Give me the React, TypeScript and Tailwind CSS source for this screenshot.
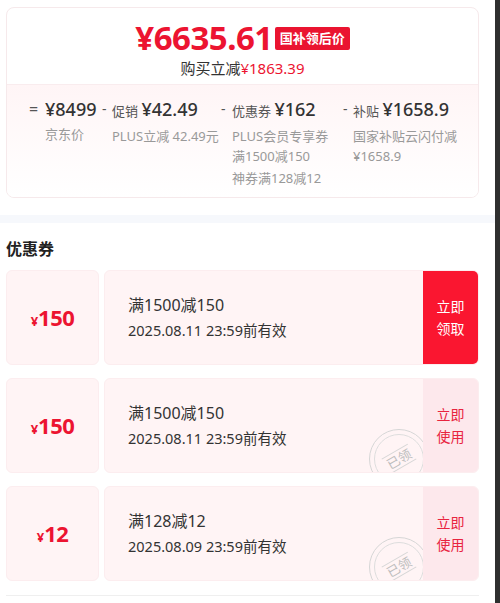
import React from 'react';

const RED = 'text-[#ec1431]';

interface Coupon {
    amount: string;
    title: string;
    expire: string;
    claimed: boolean;
}

const coupons: Coupon[] = [
    { amount: '150', title: '满1500减150', expire: '2025.08.11 23:59前有效', claimed: false },
    { amount: '150', title: '满1500减150', expire: '2025.08.11 23:59前有效', claimed: true },
    { amount: '12', title: '满128减12', expire: '2025.08.09 23:59前有效', claimed: true },
];

const Stamp: React.FC = () => (
    <div className="absolute right-[-6px] top-[50px] w-[60px] h-[60px] rounded-full border-[1.5px] border-[#d6d6d6] flex items-center justify-center">
        <div className="w-[50px] h-[50px] rounded-full border border-[#dddddd] flex items-center justify-center">
            <span className="rotate-[-30deg] text-[13px] leading-[16px] text-[#bdbdbd] border-y border-[#d6d6d6] px-[2px]">已领</span>
        </div>
    </div>
);

const CouponCard: React.FC<{ c: Coupon }> = ({ c }) => (
    <div className="flex h-[95px] gap-[5px]">
        {/* Amount stub */}
        <div className="w-[93px] rounded-[6px] bg-[#fff4f5] border border-[#fcedef] flex items-center justify-center">
            <span className={`${RED} font-bold`}>
                <span className="text-[13px]">¥</span>
                <span className="text-[22px] tracking-[-0.5px]">{c.amount}</span>
            </span>
        </div>

        {/* Body + action */}
        <div className="flex-1 flex rounded-[6px] overflow-hidden border border-[#fcedef] bg-[#fff4f5]">
            <div className="flex-1 relative overflow-hidden pl-[23px] flex flex-col justify-center">
                <div className="text-[16px] leading-[25px] text-[#333]">{c.title}</div>
                <div className="text-[14.5px] leading-[24px] text-[#333]">{c.expire}</div>
                {c.claimed && <Stamp />}
            </div>
            {c.claimed ? (
                <div className="w-[55px] bg-[#fde8ec] flex flex-col items-center justify-center text-[14px] leading-[22px] text-[#e8243f]">
                    <span>立即</span>
                    <span>使用</span>
                </div>
            ) : (
                <div className="w-[55px] bg-[#fa1630] flex flex-col items-center justify-center text-[14px] leading-[22px] text-white">
                    <span>立即</span>
                    <span>领取</span>
                </div>
            )}
        </div>
    </div>
);

export default function App() {
    return (
        <div
            className="flex w-[500px] h-[603px] overflow-hidden bg-white"
            style={{ fontFamily: '"Noto Sans", "Noto Sans CJK SC", sans-serif' }}
        >
            <div className="w-[495px] flex flex-col">
                {/* Price card */}
                <div className="pt-[7px] pl-[6px] pr-[16px]">
                    <div className="rounded-[8px] border border-[#f6e9eb] overflow-hidden">
                        <div className="h-[76px] flex flex-col items-center pt-[10px]">
                            <div className="flex items-center gap-[2px] h-[40px]">
                                <span className={`${RED} font-bold text-[33px] leading-[40px] tracking-[-0.5px]`}>¥6635.61</span>
                                <span className="bg-[#ea1430] text-white text-[13px] font-bold leading-[23px] px-[5px] rounded-[2px] mt-[1px]">国补领后价</span>
                            </div>
                            <div className="text-[15px] leading-[20px] text-[#333]">
                                购买立减<span className="text-[#ec1431]">¥1863.39</span>
                            </div>
                        </div>

                        <div className="h-[113px] border-t border-[#f9ecee] bg-gradient-to-b from-[#fff5f6] to-white pt-[12px] pl-[22px] flex text-[#333]">
                            {/* 京东价 */}
                            <div className="w-[73px] flex">
                                <span className="w-[16px] text-[16px] leading-[24px] text-[#555]">=</span>
                                <div>
                                    <div className="text-[18px] leading-[24px] font-medium">¥8499</div>
                                    <div className="mt-[3px] text-[13px] leading-[20px] text-[#999]">京东价</div>
                                </div>
                            </div>
                            {/* 促销 */}
                            <div className="w-[119px] flex">
                                <span className="w-[10px] text-[14px] leading-[24px] text-[#555]">-</span>
                                <div>
                                    <div className="leading-[24px]">
                                        <span className="text-[13px] text-[#555]">促销 </span>
                                        <span className="text-[18px] font-medium">¥42.49</span>
                                    </div>
                                    <div className="mt-[3px] text-[13px] leading-[20px] text-[#999]">PLUS立减 42.49元</div>
                                </div>
                            </div>
                            {/* 优惠券 */}
                            <div className="w-[122px] flex">
                                <span className="w-[11px] text-[14px] leading-[24px] text-[#555]">-</span>
                                <div>
                                    <div className="leading-[24px]">
                                        <span className="text-[13px] text-[#555]">优惠券 </span>
                                        <span className="text-[18px] font-medium">¥162</span>
                                    </div>
                                    <div className="mt-[3px] text-[13px] leading-[20px] text-[#999]">
                                        <div>PLUS会员专享券</div>
                                        <div>满1500减150</div>
                                        <div className="mt-[2px]">神券满128减12</div>
                                    </div>
                                </div>
                            </div>
                            {/* 补贴 */}
                            <div className="flex-1 flex">
                                <span className="w-[10px] text-[14px] leading-[24px] text-[#555]">-</span>
                                <div>
                                    <div className="leading-[24px]">
                                        <span className="text-[13px] text-[#555]">补贴 </span>
                                        <span className="text-[18px] font-medium">¥1658.9</span>
                                    </div>
                                    <div className="mt-[3px] text-[13px] leading-[20px] text-[#999]">
                                        <div>国家补贴云闪付减</div>
                                        <div>¥1658.9</div>
                                    </div>
                                </div>
                            </div>
                        </div>
                    </div>
                </div>

                <div className="h-[17px]" />
                <div className="h-[8px] bg-[#f6f8fc]" />

                {/* Coupons */}
                <div className="pl-[6px] pr-[16px]">
                    <h2 className="mt-[14px] text-[16px] leading-[24px] font-bold text-[#222]">优惠券</h2>
                    <div className="mt-[9px] flex flex-col gap-[13px]">
                        {coupons.map((c, i) => (
                            <CouponCard key={i} c={c} />
                        ))}
                    </div>
                    <div className="mt-[14px] h-px bg-[#efefef]" />
                </div>
            </div>
            <div className="w-[5px] h-full bg-[#2f2f2f]" />
        </div>
    );
}
